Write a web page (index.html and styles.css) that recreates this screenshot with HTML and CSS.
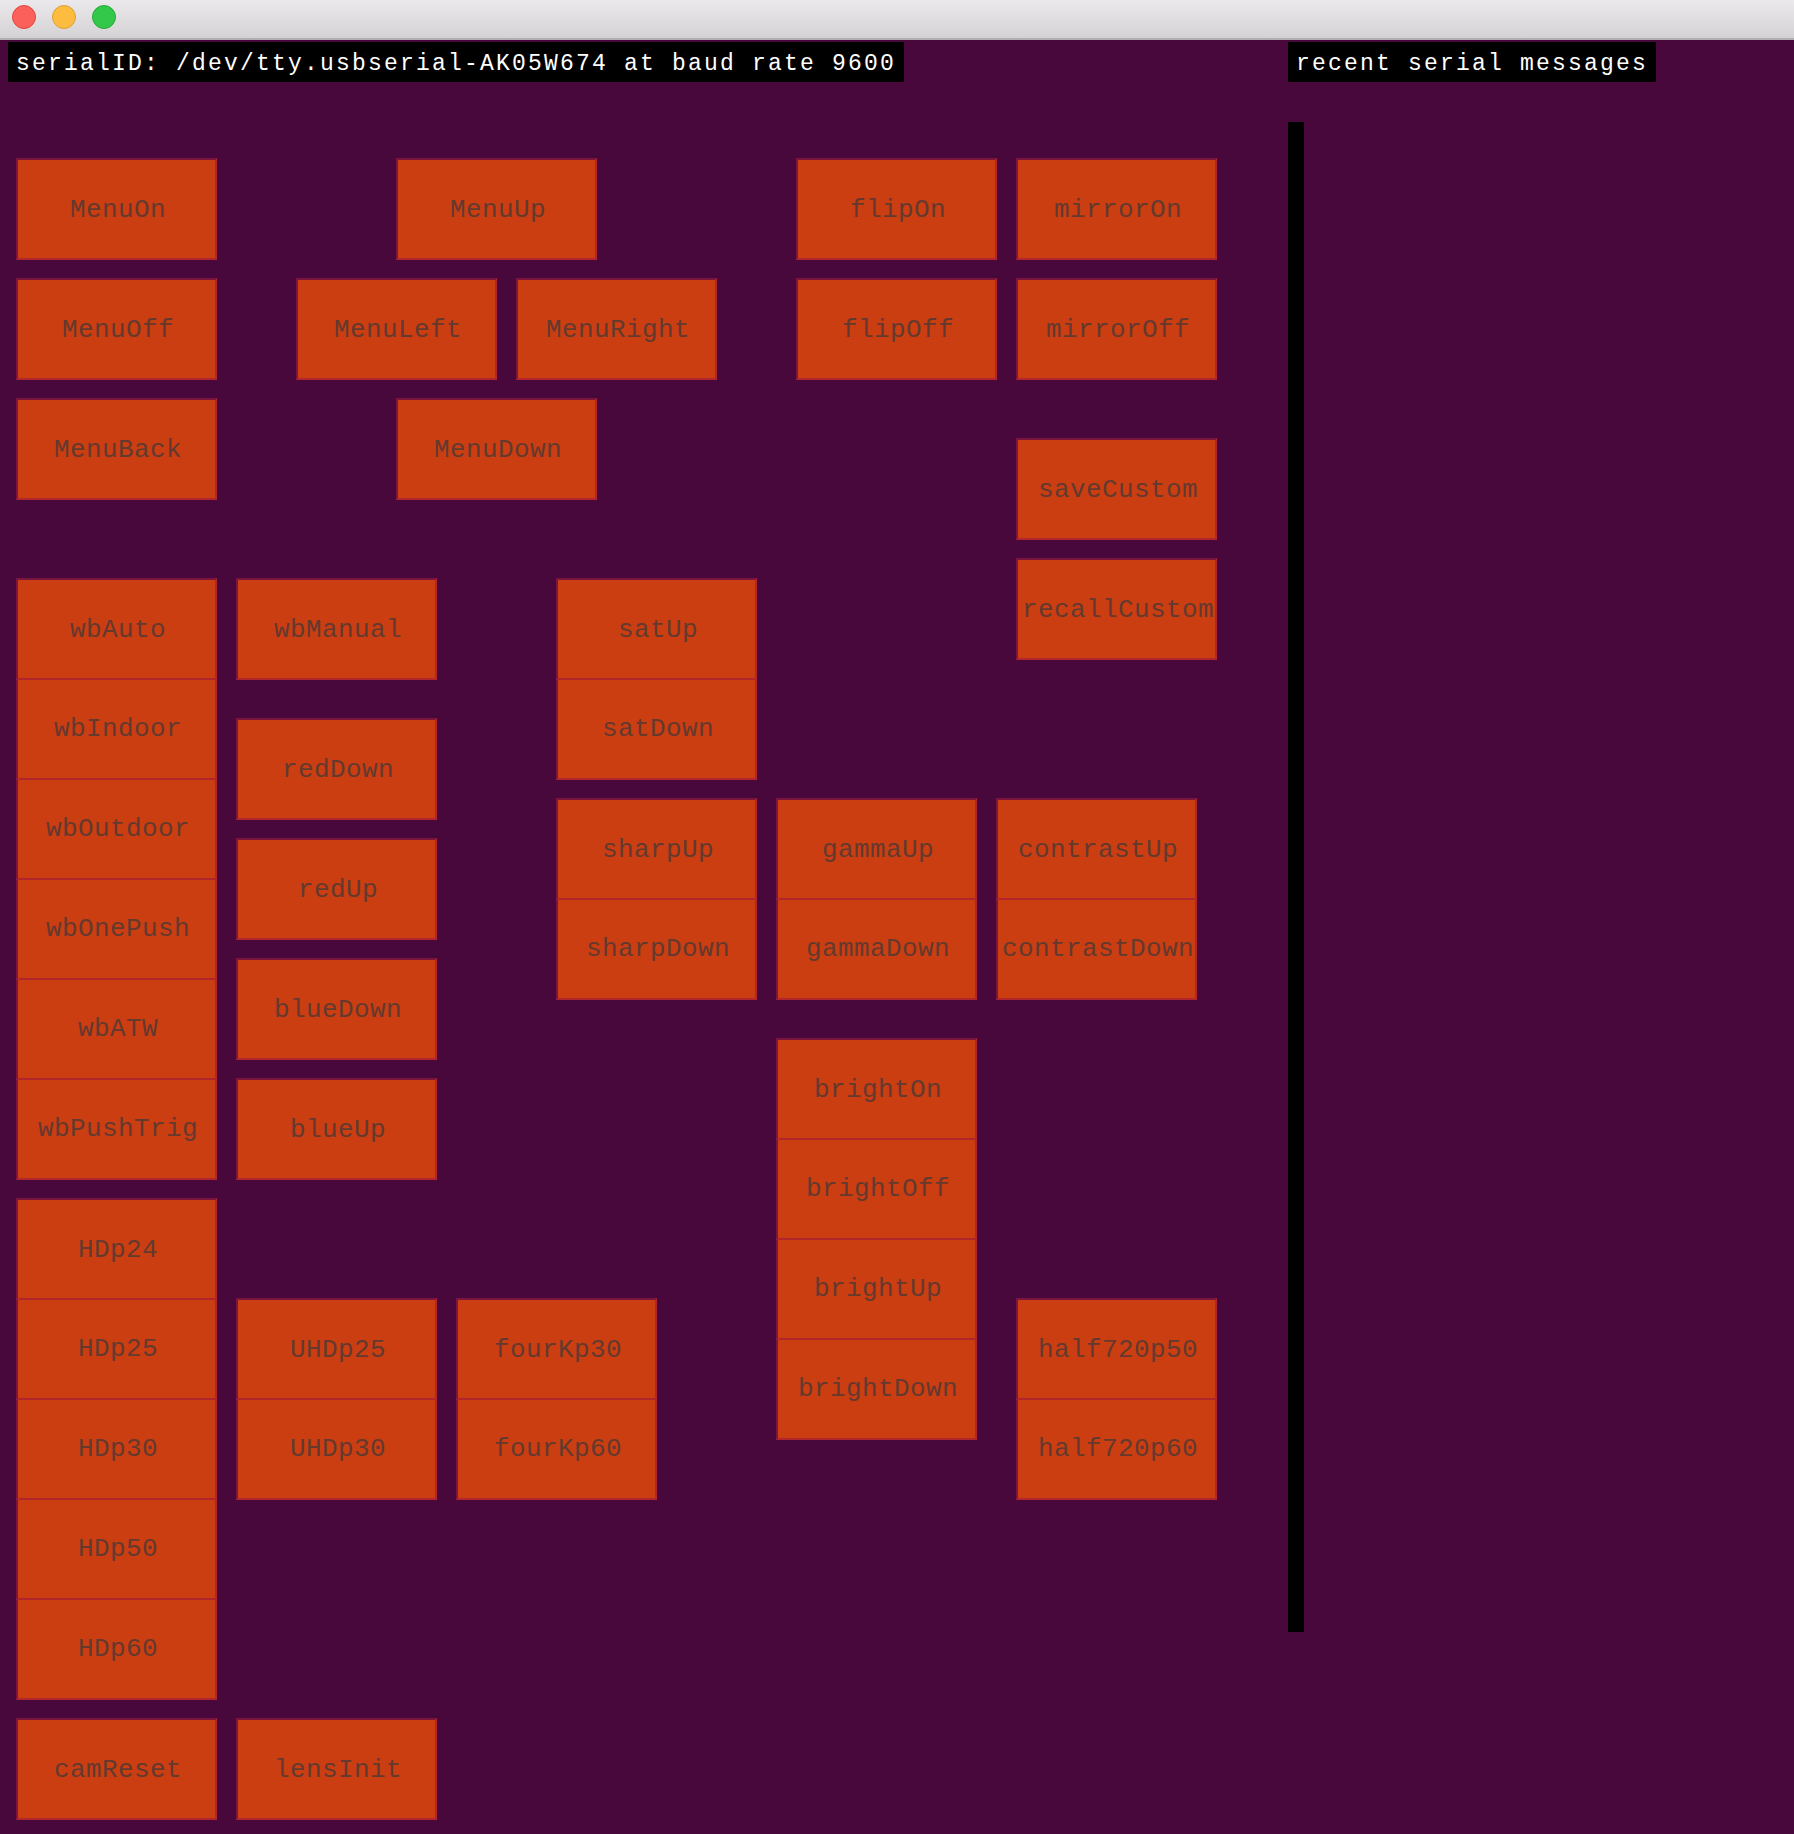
FILE: index.html
```html
<!DOCTYPE html>
<html lang="en">
<head>
<meta charset="utf-8">
<title>serial control</title>
<link rel="stylesheet" href="styles.css">
</head>
<body>
<header class="titlebar">
  <span class="dot dot-red"></span>
  <span class="dot dot-yellow"></span>
  <span class="dot dot-green"></span>
</header>
<main class="app">
  <section class="controls">
    <div class="label">serialID: /dev/tty.usbserial-AK05W674 at baud rate 9600</div>
    <div class="pad">
      <div class="btn c1 r1">MenuOn</div>
      <div class="btn c20 r1">MenuUp</div>
      <div class="btn c40 r1">flipOn</div>
      <div class="btn c51 r1">mirrorOn</div>

      <div class="btn c1 r7">MenuOff</div>
      <div class="btn c15 r7">MenuLeft</div>
      <div class="btn c26 r7">MenuRight</div>
      <div class="btn c40 r7">flipOff</div>
      <div class="btn c51 r7">mirrorOff</div>

      <div class="btn c1 r13">MenuBack</div>
      <div class="btn c20 r13">MenuDown</div>
      <div class="btn c51 r15">saveCustom</div>
      <div class="btn c51 r21">recallCustom</div>

      <div class="btn c1 r22">wbAuto</div>
      <div class="btn stk c1 r27">wbIndoor</div>
      <div class="btn stk c1 r32">wbOutdoor</div>
      <div class="btn stk c1 r37">wbOnePush</div>
      <div class="btn stk c1 r42">wbATW</div>
      <div class="btn stk c1 r47">wbPushTrig</div>

      <div class="btn c12 r22">wbManual</div>
      <div class="btn c12 r29">redDown</div>
      <div class="btn c12 r35">redUp</div>
      <div class="btn c12 r41">blueDown</div>
      <div class="btn c12 r47">blueUp</div>

      <div class="btn c28 r22">satUp</div>
      <div class="btn stk c28 r27">satDown</div>

      <div class="btn c28 r33">sharpUp</div>
      <div class="btn stk c28 r38">sharpDown</div>
      <div class="btn c39 r33">gammaUp</div>
      <div class="btn stk c39 r38">gammaDown</div>
      <div class="btn c50 r33">contrastUp</div>
      <div class="btn stk c50 r38">contrastDown</div>

      <div class="btn c39 r45">brightOn</div>
      <div class="btn stk c39 r50">brightOff</div>
      <div class="btn stk c39 r55">brightUp</div>
      <div class="btn stk c39 r60">brightDown</div>

      <div class="btn c1 r53">HDp24</div>
      <div class="btn stk c1 r58">HDp25</div>
      <div class="btn stk c1 r63">HDp30</div>
      <div class="btn stk c1 r68">HDp50</div>
      <div class="btn stk c1 r73">HDp60</div>

      <div class="btn c12 r58">UHDp25</div>
      <div class="btn stk c12 r63">UHDp30</div>
      <div class="btn c23 r58">fourKp30</div>
      <div class="btn stk c23 r63">fourKp60</div>

      <div class="btn c51 r58">half720p50</div>
      <div class="btn stk c51 r63">half720p60</div>

      <div class="btn c1 r79">camReset</div>
      <div class="btn c12 r79">lensInit</div>
    </div>
  </section>
  <aside class="messages">
    <div class="label">recent serial messages</div>
    <div class="msg-bar"></div>
  </aside>
</main>
</body>
</html>
```

FILE: styles.css
```css
* {
  box-sizing: border-box;
}

html,
body {
  margin: 0;
  background: #48083c;
}

body {
  width: 1794px;
  min-height: 1834px;
  font-family: "Liberation Mono", "DejaVu Sans Mono", monospace;
}

.titlebar {
  height: 40px;
  display: flex;
  align-items: center;
  gap: 16px;
  padding: 0 0 4px 12px;
  background: linear-gradient(#ebe9eb, #d4d2d4);
  border-bottom: 2px solid #b1afb1;
}

.dot {
  width: 24px;
  height: 24px;
  border-radius: 50%;
}

.dot-red {
  background: #fc605b;
  border: 1px solid #e0473f;
}

.dot-yellow {
  background: #fdbc40;
  border: 1px solid #dea131;
}

.dot-green {
  background: #34c84a;
  border: 1px solid #27a93a;
}

.app {
  display: flex;
}

.controls {
  width: 1280px;
  padding: 2px 0 0 8px;
  display: flex;
  flex-direction: column;
  align-items: flex-start;
}

.label {
  height: 40px;
  line-height: 45px;
  padding: 0 8px;
  overflow: hidden;
  background: #000;
  color: #fff;
  font-size: 23px;
  letter-spacing: 2.2px;
  white-space: pre;
}

.pad {
  display: grid;
  grid-template-columns: repeat(60, 20px);
  grid-auto-rows: 20px;
  margin: 76px 0 0 8px;
}

.btn {
  grid-column-end: span 10;
  grid-row-end: span 5;
  align-self: start;
  justify-self: start;
  width: 201px;
  height: 102px;
  display: flex;
  align-items: center;
  justify-content: center;
  padding: 2px 0 0 3px;
  background: #cb3e11;
  border: 2px solid;
  border-color: #7c1440 #b0262c #b0262c #7c1440;
  color: #64392e;
  font-size: 26px;
  letter-spacing: 0.4px;
  white-space: nowrap;
  overflow: hidden;
}

.btn.stk {
  border-top: 0;
  height: 100px;
  margin-top: 2px;
  padding-top: 0;
}

.c1 { grid-column-start: 1; }
.c12 { grid-column-start: 12; }
.c15 { grid-column-start: 15; }
.c20 { grid-column-start: 20; }
.c23 { grid-column-start: 23; }
.c26 { grid-column-start: 26; }
.c28 { grid-column-start: 28; }
.c39 { grid-column-start: 39; }
.c40 { grid-column-start: 40; }
.c50 { grid-column-start: 50; }
.c51 { grid-column-start: 51; }

.r1 { grid-row-start: 1; }
.r7 { grid-row-start: 7; }
.r13 { grid-row-start: 13; }
.r15 { grid-row-start: 15; }
.r21 { grid-row-start: 21; }
.r22 { grid-row-start: 22; }
.r27 { grid-row-start: 27; }
.r29 { grid-row-start: 29; }
.r32 { grid-row-start: 32; }
.r33 { grid-row-start: 33; }
.r35 { grid-row-start: 35; }
.r37 { grid-row-start: 37; }
.r38 { grid-row-start: 38; }
.r41 { grid-row-start: 41; }
.r42 { grid-row-start: 42; }
.r45 { grid-row-start: 45; }
.r47 { grid-row-start: 47; }
.r50 { grid-row-start: 50; }
.r53 { grid-row-start: 53; }
.r55 { grid-row-start: 55; }
.r58 { grid-row-start: 58; }
.r60 { grid-row-start: 60; }
.r63 { grid-row-start: 63; }
.r68 { grid-row-start: 68; }
.r73 { grid-row-start: 73; }
.r79 { grid-row-start: 79; }

.messages {
  padding: 2px 0 0 8px;
  display: flex;
  flex-direction: column;
  align-items: flex-start;
}

.msg-bar {
  width: 16px;
  height: 1510px;
  margin-top: 40px;
  background: #000;
}
```
